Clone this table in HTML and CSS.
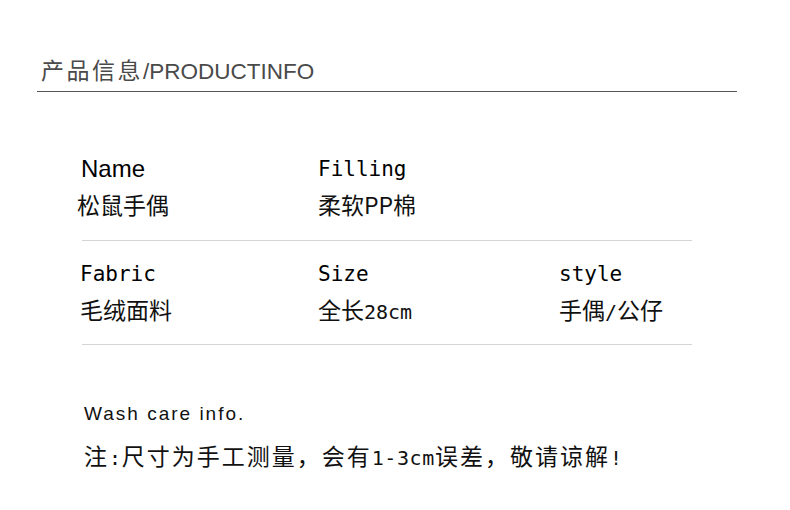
FILE: index.html
```html
<!DOCTYPE html>
<html lang="zh">
<head>
<meta charset="utf-8">
<link rel="stylesheet" href="styles.css">
</head>
<body>
<div class="page">
  <div class="header"><span class="cjk">产品信息</span>/PRODUCTINFO</div>
  <div class="table">
    <div class="row row1">
      <div class="cell c1"><div class="label sans">Name</div><div class="value v-name">松鼠手偶</div></div>
      <div class="cell c2"><div class="label">Filling</div><div class="value">柔软PP棉</div></div>
    </div>
    <div class="row row2">
      <div class="cell c1"><div class="label">Fabric</div><div class="value">毛绒面料</div></div>
      <div class="cell c2"><div class="label">Size</div><div class="value">全长<span class="mono">28cm</span></div></div>
      <div class="cell c3"><div class="label">style</div><div class="value">手偶<span class="mono">/</span>公仔</div></div>
    </div>
  </div>
  <div class="notes">
    <div class="wash">Wash care info.</div>
    <div class="note">注<span class="mono">:</span>尺寸为手工测量，会有<span class="mono">1-3cm</span>误差，敬请谅解<span class="mono">!</span></div>
  </div>
</div>
</body>
</html>
```

FILE: styles.css
```css
html, body {
  margin: 0;
  padding: 0;
  background: #fff;
}
body {
  width: 790px;
  height: 510px;
  overflow: hidden;
  font-family: "Liberation Sans", "Noto Sans CJK SC", sans-serif;
  color: #111;
}
.page {
  padding-top: 57px;
}
.header {
  margin-left: 37px;
  width: 700px;
  height: 35px;
  padding-left: 4px;
  box-sizing: border-box;
  font-family: "Liberation Sans", "Noto Sans CJK SC", sans-serif;
  font-size: 22.5px;
  line-height: 28px;
  color: #4a4a4a;
  border-bottom: 1px solid #555;
}
.header .cjk {
  font-size: 23px;
  letter-spacing: 2.5px;
}
.table {
  margin-left: 82px;
  width: 610px;
  margin-top: 62px;
}
.row {
  display: flex;
  border-bottom: 1px solid #d4d4d4;
}
.row1 {
  padding-bottom: 21px;
}
.row2 {
  padding-top: 18px;
  padding-bottom: 17px;
}
.cell {
  display: flex;
  flex-direction: column;
  gap: 5px;
}
.c1 { width: 238px; margin-left: -2px; }
.c2 { width: 241px; }
.label {
  font-family: "DejaVu Sans Mono", monospace;
  font-size: 21px;
  line-height: 30px;
  color: #000;
}
.label.sans {
  font-family: "Liberation Sans", sans-serif;
  font-size: 24px;
  margin-left: 1px;
}
.value {
  font-family: "Noto Sans CJK SC", sans-serif;
  font-size: 23px;
  line-height: 30px;
}
.mono {
  font-family: "DejaVu Sans Mono", monospace;
  font-size: 20px;
}
.v-name { margin-left: -3px; }
.notes {
  margin-left: 84px;
  margin-top: 57px;
}
.wash {
  font-family: "Liberation Sans", sans-serif;
  font-size: 19px;
  line-height: 24px;
  letter-spacing: 2px;
}
.note {
  margin-top: 14px;
  font-family: "Noto Sans CJK SC", sans-serif;
  font-size: 23px;
  line-height: 30px;
  letter-spacing: 2px;
}
.note .mono {
  letter-spacing: 0.6px;
}
```
